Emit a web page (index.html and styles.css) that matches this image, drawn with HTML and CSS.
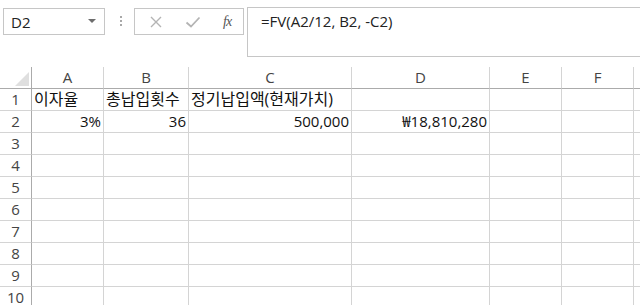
FILE: index.html
```html
<!DOCTYPE html>
<html lang="ko">
<head>
  <meta charset="UTF-8">
  <title>Excel - FV</title>
  <link rel="stylesheet" href="styles.css">
</head>
<body>
  <div class="formula-bar">
    <div class="name-box">
      <span>D2</span>
      <svg class="caret" width="8" height="5" viewBox="0 0 8 5"><path d="M0 0h8L4 4z" fill="#6d6d6d"/></svg>
    </div>
    <div class="grip">
      <i></i><i></i><i></i>
    </div>
    <div class="fx-buttons">
      <svg width="14" height="14" viewBox="0 0 14 14"><path d="M2 2l10 10M12 2L2 12" stroke="#b4b4b4" stroke-width="1.4" fill="none"/></svg>
      <svg width="16" height="14" viewBox="0 0 16 14"><path d="M1.5 7.5l4.5 4 8.5-9" stroke="#b4b4b4" stroke-width="1.8" fill="none"/></svg>
      <span class="fx">fx</span>
    </div>
    <div class="formula">=FV(A2/12, B2, -C2)</div>
  </div>

  <div class="sheet">
    <div class="corner"><span class="tri"></span></div>
    <div class="col-hdr">A</div>
    <div class="col-hdr">B</div>
    <div class="col-hdr">C</div>
    <div class="col-hdr">D</div>
    <div class="col-hdr">E</div>
    <div class="col-hdr">F</div>
    <div class="col-hdr"></div>

    <div class="row-hdr">1</div>
    <div class="cell ko">이자율</div>
    <div class="cell ko">총납입횟수</div>
    <div class="cell ko">정기납입액(현재가치)</div>
    <div class="cell"></div>
    <div class="cell"></div>
    <div class="cell"></div>
    <div class="cell"></div>

    <div class="row-hdr">2</div>
    <div class="cell num">3%</div>
    <div class="cell num">36</div>
    <div class="cell num">500,000</div>
    <div class="cell num">₩18,810,280</div>
    <div class="cell"></div>
    <div class="cell"></div>
    <div class="cell"></div>

    <div class="row-hdr">3</div><div class="cell"></div><div class="cell"></div><div class="cell"></div><div class="cell"></div><div class="cell"></div><div class="cell"></div><div class="cell"></div>
    <div class="row-hdr">4</div><div class="cell"></div><div class="cell"></div><div class="cell"></div><div class="cell"></div><div class="cell"></div><div class="cell"></div><div class="cell"></div>
    <div class="row-hdr">5</div><div class="cell"></div><div class="cell"></div><div class="cell"></div><div class="cell"></div><div class="cell"></div><div class="cell"></div><div class="cell"></div>
    <div class="row-hdr">6</div><div class="cell"></div><div class="cell"></div><div class="cell"></div><div class="cell"></div><div class="cell"></div><div class="cell"></div><div class="cell"></div>
    <div class="row-hdr">7</div><div class="cell"></div><div class="cell"></div><div class="cell"></div><div class="cell"></div><div class="cell"></div><div class="cell"></div><div class="cell"></div>
    <div class="row-hdr">8</div><div class="cell"></div><div class="cell"></div><div class="cell"></div><div class="cell"></div><div class="cell"></div><div class="cell"></div><div class="cell"></div>
    <div class="row-hdr">9</div><div class="cell"></div><div class="cell"></div><div class="cell"></div><div class="cell"></div><div class="cell"></div><div class="cell"></div><div class="cell"></div>
    <div class="row-hdr">10</div><div class="cell"></div><div class="cell"></div><div class="cell"></div><div class="cell"></div><div class="cell"></div><div class="cell"></div><div class="cell"></div>
  </div>
</body>
</html>
```

FILE: styles.css
```css
* {
  margin: 0;
  padding: 0;
  box-sizing: border-box;
}

body {
  width: 640px;
  height: 305px;
  overflow: hidden;
  background: #fff;
  font-family: 'Open Sans', 'Noto Sans CJK KR', sans-serif;
  color: #222;
}

/* formula bar */
.formula-bar {
  display: flex;
  align-items: flex-start;
  height: 67px;
  padding-left: 3px;
}

.name-box {
  display: flex;
  align-items: center;
  justify-content: space-between;
  width: 102px;
  height: 27px;
  margin-top: 8px;
  padding: 0 8px 0 7px;
  border: 1px solid #c6c6c6;
  font-size: 15px;
  color: #222;
}

.grip {
  display: flex;
  flex-direction: column;
  gap: 2px;
  margin: 16px 12px 0 15px;
}

.grip i {
  display: block;
  width: 2px;
  height: 2px;
  background: #a8a8a8;
}

.fx-buttons {
  display: flex;
  align-items: center;
  gap: 22px;
  width: 110px;
  height: 27px;
  margin-top: 8px;
  padding-left: 14px;
  border: 1px solid #c6c6c6;
}

.fx {
  font-family: 'Liberation Serif', serif;
  font-style: italic;
  font-size: 14px;
  color: #555;
  letter-spacing: -1px;
}

.formula {
  flex: 1;
  height: 50px;
  margin: 7px -10px 0 3px;
  padding: 3px 0 0 13px;
  border: 1px solid #c6c6c6;
  font-size: 15px;
  color: #222;
}

/* worksheet grid */
.sheet {
  display: grid;
  grid-template-columns: 32px 72px 85px 163px 138px 72px 72px 20px;
  grid-auto-rows: 22px;
  font-size: 15px;
}

.corner,
.col-hdr,
.row-hdr,
.cell {
  border-right: 1px solid #d4d4d4;
  border-bottom: 1px solid #d4d4d4;
  line-height: 21px;
  white-space: nowrap;
}

.corner {
  position: relative;
  border-right-color: #ababab;
  border-bottom-color: #ababab;
}

.tri {
  position: absolute;
  right: 2px;
  bottom: 2px;
  width: 0;
  height: 0;
  border-left: 14px solid transparent;
  border-bottom: 14px solid #dfdfdf;
}

.col-hdr {
  text-align: center;
  color: #444;
  border-bottom-color: #ababab;
}

.row-hdr {
  text-align: center;
  color: #444;
  border-right-color: #ababab;
}

.cell {
  padding: 0 2px;
  overflow: visible;
  color: #111;
}

.cell.ko {
  font-size: 16px;
  line-height: 20px;
}

.cell.num {
  text-align: right;
}
```
